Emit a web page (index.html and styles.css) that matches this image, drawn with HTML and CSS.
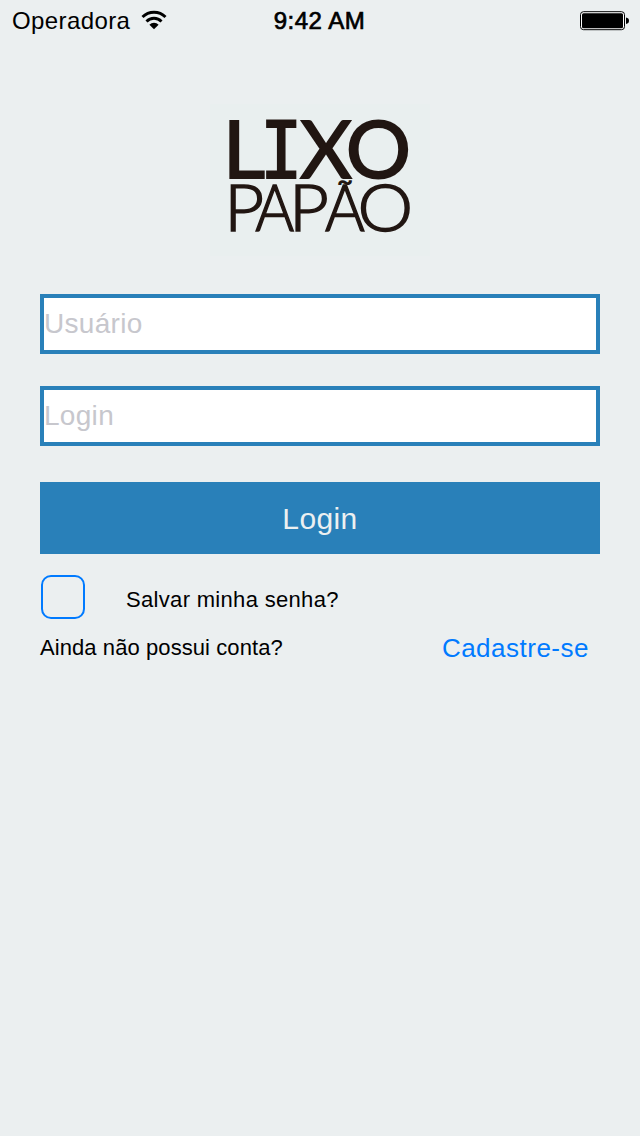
FILE: index.html
```html
<!DOCTYPE html>
<html lang="pt-BR">
<head>
<meta charset="utf-8">
<title>Lixo Papão</title>
<link rel="stylesheet" href="styles.css">
</head>
<body>
<header class="status">
  <div class="carrier"><span>Operadora</span>
    <svg class="wifi" width="26" height="20" viewBox="0 0 26 20" fill="none" stroke="#000" stroke-width="2.9">
      <path d="M1.5 7a16.2 16.2 0 0 1 23 0M5.5 11.4a10.6 10.6 0 0 1 15 0"/>
      <path d="M13 19.2 8.4 14.7a6.5 6.5 0 0 1 9.2 0z" fill="#000" stroke="none"/>
    </svg>
  </div>
  <div class="time">9:42 AM</div>
  <svg class="battery" width="50" height="20" viewBox="0 0 50 20">
    <rect x=".5" y=".7" width="44" height="18" rx="3" fill="#fff" stroke="#000"/>
    <rect x="2" y="2.2" width="41" height="15" rx="1.5"/>
    <path d="M46 6.5q3 .5 3 3.3T46 13z"/>
  </svg>
</header>
<main>
  <svg class="logo" width="224" height="152" viewBox="208 104 224 152">
    <rect x="210" y="104" width="220" height="152" fill="#e9efef"/>
    <g class="bold">
      <text transform="translate(222.7 178) scale(1.03 1)">L</text>
      <text class="slab" transform="translate(260 178) scale(.9 1)">I</text>
      <text transform="translate(300 178)">X</text>
      <text transform="translate(345.8 178) scale(1.02 1)">O</text>
    </g>
    <g class="thin">
      <text transform="translate(224.3 231.3) scale(1.07 1)">P</text>
      <text transform="translate(255.3 231.3) scale(.92 1)">A</text>
      <text transform="translate(289 231.3) scale(1.07 1)">P</text>
      <text transform="translate(325 231.3) scale(.94 1)">A</text>
      <text class="tilde" transform="translate(335.8 208) scale(1.15 1)">˜</text>
      <text transform="translate(357.5 231.3) scale(1.09 1)">O</text>
    </g>
  </svg>
  <form class="form">
    <input class="field" type="text" placeholder="Usuário">
    <input class="field" type="password" placeholder="Login">
    <button class="submit" type="button">Login</button>
    <label class="save"><span class="box"></span><span class="save-text">Salvar minha senha?</span></label>
    <div class="signup"><span>Ainda não possui conta?</span><a class="link">Cadastre-se</a></div>
  </form>
</main>
</body>
</html>
```
FILE: styles.css
```css
* { box-sizing: border-box; }
body {
  margin: 0;
  min-height: 1136px;
  background: #ebeff0;
  color: #000;
  font-family: "Liberation Sans", Arial, sans-serif;
}
.status {
  height: 40px;
  display: grid;
  grid-template-columns: 1fr auto 1fr;
  align-items: center;
  padding: 2px 10px 0 12px;
  font-size: 24px;
  line-height: 38px;
}
.carrier { display: flex; align-items: center; letter-spacing: .4px; }
.wifi { margin: -2px 0 0 11px; }
.time { margin-left: -3px; letter-spacing: .5px; -webkit-text-stroke: .7px #000; }
.battery { justify-self: end; }
.logo { display: block; overflow: visible; margin: 64px auto 0; fill: #211612; }
.bold { font: 400 80px Lato, sans-serif; stroke: #211612; stroke-width: 1.8px; }
.slab { font: 400 78.5px "DejaVu Sans Mono", monospace; }
.thin { font: 300 64.5px Lato, sans-serif; stroke: #211612; stroke-width: 1.5px; }
.tilde { font-size: 40px; stroke-width: 1.5px; }
.form { display: flex; flex-direction: column; padding: 38px 40px 0; }
.field {
  height: 60px;
  margin: 0 0 32px;
  padding: 0;
  border: 4px solid #2980b9;
  border-radius: 0;
  background: #fff;
  font: 28px "Liberation Sans", Arial, sans-serif;
  letter-spacing: .3px;
}
.field::placeholder { color: #c7c7cd; opacity: 1; }
.submit {
  height: 72px;
  margin-top: 4px;
  padding: 2px 0 0;
  border: 0;
  background: #2980b9;
  color: #ecf0f1;
  font: 30px "Liberation Sans", Arial, sans-serif;
  letter-spacing: .4px;
}
.save { display: flex; align-items: center; height: 46px; margin-top: 20px; padding-left: 1px; font-size: 22px; letter-spacing: .32px; }
.box { width: 44px; height: 44px; border: 2px solid #007aff; border-radius: 10px; }
.save-text { margin: 6px 0 0 41px; }
.signup { display: flex; justify-content: space-between; align-items: center; height: 50px; padding: 6px 11px 0 0; font-size: 22px; letter-spacing: .08px; }
.link { color: #007aff; font-size: 26px; letter-spacing: .5px; }
```
